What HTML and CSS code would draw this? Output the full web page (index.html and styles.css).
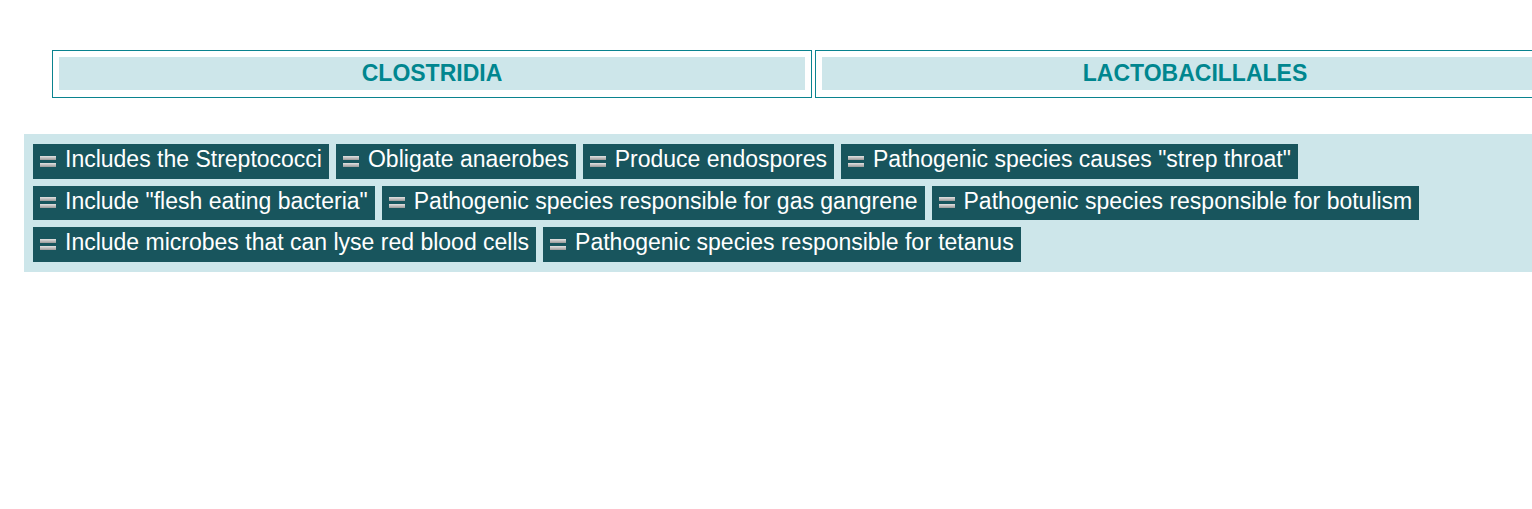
FILE: index.html
```html
<!DOCTYPE html>
<html>
<head>
<meta charset="utf-8">
<link rel="stylesheet" href="styles.css">
</head>
<body>
<div class="page">
  <div class="headers">
    <div class="cat"><div class="cat-title">CLOSTRIDIA</div></div>
    <div class="cat"><div class="cat-title">LACTOBACILLALES</div></div>
  </div>
  <div class="pool">
    <div class="chip"><span class="grip"><i></i><i></i></span><span class="label">Includes the Streptococci</span></div>
    <div class="chip"><span class="grip"><i></i><i></i></span><span class="label">Obligate anaerobes</span></div>
    <div class="chip"><span class="grip"><i></i><i></i></span><span class="label">Produce endospores</span></div>
    <div class="chip"><span class="grip"><i></i><i></i></span><span class="label">Pathogenic species causes "strep throat"</span></div>
    <div class="chip"><span class="grip"><i></i><i></i></span><span class="label">Include "flesh eating bacteria"</span></div>
    <div class="chip"><span class="grip"><i></i><i></i></span><span class="label">Pathogenic species responsible for gas gangrene</span></div>
    <div class="chip"><span class="grip"><i></i><i></i></span><span class="label">Pathogenic species responsible for botulism</span></div>
    <div class="chip"><span class="grip"><i></i><i></i></span><span class="label">Include microbes that can lyse red blood cells</span></div>
    <div class="chip"><span class="grip"><i></i><i></i></span><span class="label">Pathogenic species responsible for tetanus</span></div>
  </div>
</div>
</body>
</html>
```

FILE: styles.css
```css
html, body {
  margin: 0;
  padding: 0;
  overflow: hidden;
  background: #ffffff;
}
body {
  font-family: "Liberation Sans", Arial, sans-serif;
  width: 1532px;
  height: 509px;
}
.page {
  padding-top: 50px;
}
.headers {
  display: flex;
  gap: 3px;
  margin-left: 52px;
  width: 1600px;
}
.cat {
  flex: 0 0 760px;
  box-sizing: border-box;
  border: 1px solid #0a838f;
  padding: 6px 6px 7px 6px;
}
.cat-title {
  background: #cde6ea;
  color: #00868f;
  font-weight: bold;
  font-size: 23px;
  line-height: 25px;
  padding: 4px 0;
  text-align: center;
}
.pool {
  margin-top: 36px;
  margin-left: 24px;
  width: 1540px;
  box-sizing: border-box;
  background: #cde6ea;
  padding: 10px 9px 10px 9px;
  display: flex;
  flex-wrap: wrap;
  gap: 7px 7px;
  align-content: flex-start;
}
.chip {
  display: flex;
  align-items: center;
  background: #18555d;
  color: #ffffff;
  font-size: 23px;
  line-height: 26px;
  height: 34.5px;
  box-sizing: border-box;
  padding: 0 7px 0 7px;
}
.grip {
  display: flex;
  flex-direction: column;
  gap: 3px;
  width: 16px;
  margin-right: 9px;
}
.grip i {
  display: block;
  height: 4px;
  background: linear-gradient(#e2e2e2, #9a9a9a);
}
.label {
  white-space: nowrap;
  position: relative;
  top: -2px;
}
```
